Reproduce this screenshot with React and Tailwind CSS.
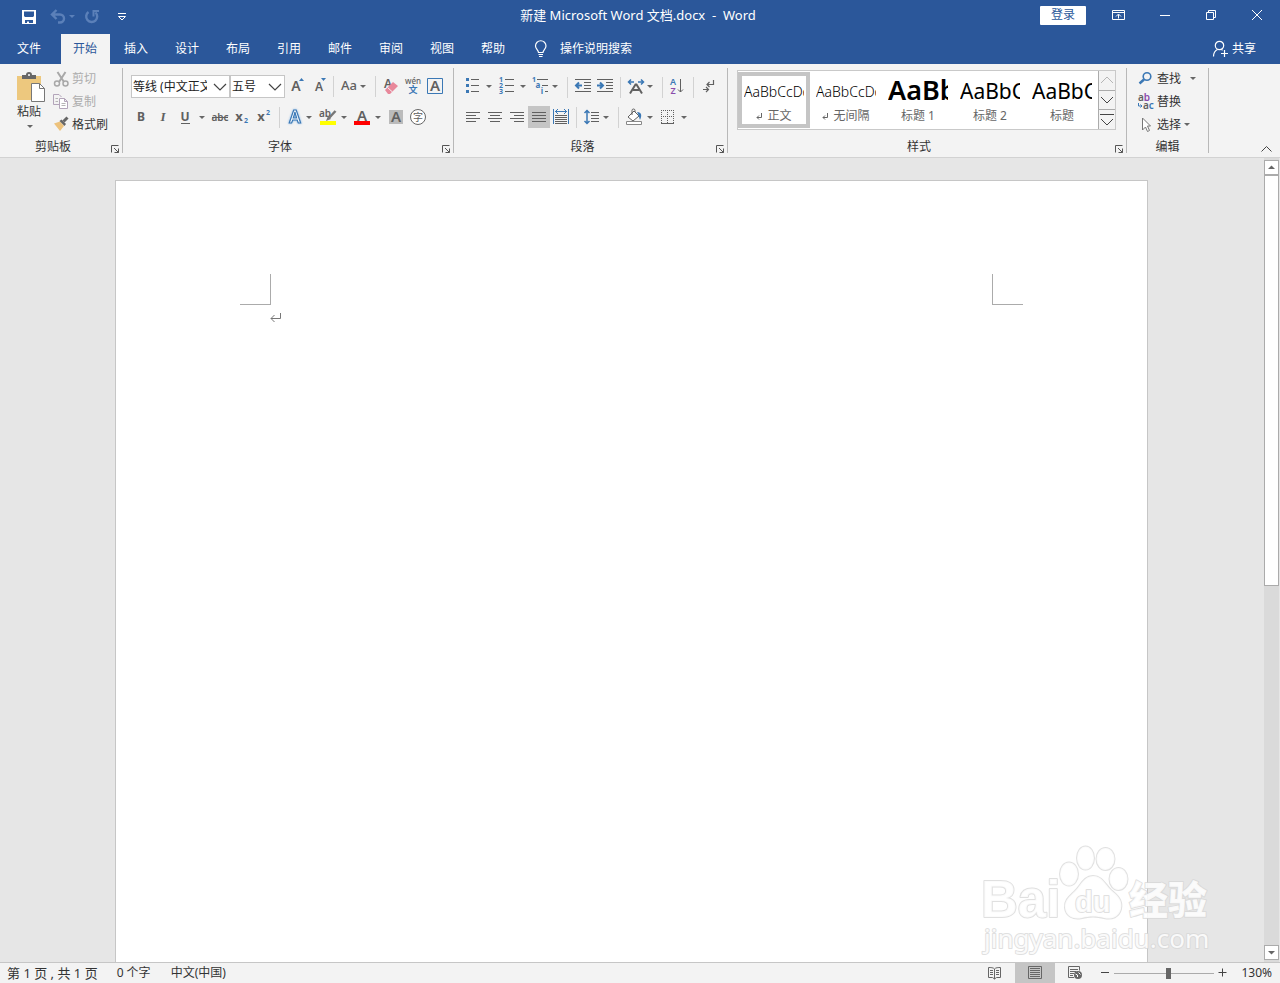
import React from "react";

const INK = "#606060";
const BLUE = "#3b78b5";

/* ---------- shared pieces ---------- */

function Art({ w = 22, h = 22, children, className = "" }) {
  return (
    <svg
      width={w}
      height={h}
      viewBox={`0 0 ${w} ${h}`}
      fill="none"
      aria-hidden="true"
      className={`block shrink-0 ${className}`}
    >
      {children}
    </svg>
  );
}

function Caret({ x, y = 11, fill = "#666" }) {
  return <path d={`M${x - 3} ${y - 1}h6l-3 3z`} fill={fill} />;
}

function Tool({ label, w = 22, active = false, children }) {
  return (
    <button
      type="button"
      aria-label={label}
      title={label}
      className={`block shrink-0 ${active ? "bg-[#c5c5c5]" : "hover:bg-[#d5d5d5]"}`}
    >
      <Art w={w}>{children}</Art>
    </button>
  );
}

function Glyph({ x = 11, y = 16, size = 13, weight = 700, fill = INK, italic, children, ...rest }) {
  return (
    <text
      x={x}
      y={y}
      fontSize={size}
      fontWeight={weight}
      fill={fill}
      fontStyle={italic ? "italic" : undefined}
      textAnchor="middle"
      {...rest}
    >
      {children}
    </text>
  );
}

function Divider({ tight = false }) {
  return <span className={`h-[21px] w-px shrink-0 bg-[#d2d2d2] ${tight ? "ml-[3px] mr-1" : "mx-1"}`} />;
}

function Group({ name, width, launcher = true, children }) {
  return (
    <section aria-label={name} className={`relative flex h-[85px] shrink-0 flex-col border-r border-[#b8b8b8] ${width}`}>
      <div className="h-[75px]">{children}</div>
      <div className={`leading-3 text-center ${launcher ? "pr-4" : ""}`}>{name}</div>
      {launcher && (
        <button type="button" aria-label={`${name}设置`} className="absolute -bottom-0.5 right-px">
          <Art w={12} h={12}>
            <path d="M2.500 9.500V2.500H9.500M5 5l4.500 4.500M9.500 5.500v4H5.500" stroke="#555" />
          </Art>
        </button>
      )}
    </section>
  );
}

/* ---------- title bar and tabs ---------- */

function TitleBar() {
  return (
    <header className="grid h-[30px] grid-cols-[1fr_auto_1fr] items-center bg-[#2b579a] text-white">
      <div className="flex items-center pl-[18px]">
        <button type="button" aria-label="保存">
          <Art w={22} h={30}>
            <path d="M4 10h14v14H4z" fill="#fff" />
            <path d="M6 11.500h10v4.500l-1 1H7l-1-1zM7 20h8v3h-4v-1.500H9V23H7z" fill="#2b579a" />
          </Art>
        </button>
        <button type="button" aria-label="撤消" className="ml-2">
          <Art w={32} h={30}>
            <path d="M4 14.500h8a4 4 0 0 1 0 8h-2M8.500 10L4 14.500l4.500 4.500" stroke="#5b80b9" strokeWidth="2.400" />
            <Caret x={24} y={16} fill="#5b80b9" />
          </Art>
        </button>
        <button type="button" aria-label="恢复" className="ml-0.5">
          <Art w={22} h={30}>
            <path d="M6.500 12A5.500 5.500 0 1 0 13.500 12.500" stroke="#5b80b9" strokeWidth="2.400" />
            <path d="M10.500 11H17M11.500 10v6.500" stroke="#5b80b9" strokeWidth="2" />
          </Art>
        </button>
        <button type="button" aria-label="自定义快速访问工具栏" className="ml-2.5">
          <Art w={20} h={30}>
            <path d="M4 13.500h8M4.500 16.500L8 20l3.500-3.500z" stroke="#fff" />
          </Art>
        </button>
      </div>
      <h1 className="whitespace-pre pr-1 text-[13px]">新建 Microsoft Word 文档.docx  -  Word</h1>
      <div className="flex items-center justify-end">
        <button type="button" className="mr-2.5 h-[19px] w-[46px] rounded-[1px] bg-white text-[#2b579a]">
          登录
        </button>
        <button type="button" aria-label="功能区显示选项">
          <Art w={46} h={30}>
            <path d="M16.500 10.500h12v9h-12zM16.500 12.500h12M22.500 18.500v-4M20 16.500l2.500-2.500 2.500 2.500" stroke="#fff" />
          </Art>
        </button>
        <button type="button" aria-label="最小化">
          <Art w={46} h={30}>
            <path d="M18 15.500h10" stroke="#fff" />
          </Art>
        </button>
        <button type="button" aria-label="向下还原">
          <Art w={46} h={30}>
            <path d="M18.500 12.500h7v7h-7zM20.500 12.500v-2h7v7h-2" stroke="#fff" />
          </Art>
        </button>
        <button type="button" aria-label="关闭">
          <Art w={46} h={30}>
            <path d="M18 10l10 10M28 10L18 20" stroke="#fff" />
          </Art>
        </button>
      </div>
    </header>
  );
}

const TABS = ["文件", "开始", "插入", "设计", "布局", "引用", "邮件", "审阅", "视图", "帮助"];

function TabBar() {
  return (
    <nav className="flex h-[34px] items-end bg-[#2b579a] text-white">
      <div role="tablist" className="flex gap-0.5">
        {TABS.map((tab) => (
          <button
            key={tab}
            type="button"
            role="tab"
            aria-selected={tab === "开始"}
            className={`h-[30px] pr-px ${tab === "文件" ? "w-[59px]" : "w-[49px]"} ${
              tab === "开始" ? "bg-[#f3f3f3] text-[#2b579a]" : ""
            }`}
          >
            {tab}
          </button>
        ))}
      </div>
      <button type="button" className="ml-[15px] flex h-[30px] items-center gap-[11px]">
        <Art w={16} h={18}>
          <path
            d="M5.500 12.500C5.500 10 2.500 9 2.500 6a5 5 0 0 1 10.500 0c0 3-3 4-3 6.500zM5.500 14.500h4.500M6 16.500h3.500"
            stroke="#fff"
            strokeWidth="1.200"
          />
        </Art>
        <span>操作说明搜索</span>
      </button>
      <button type="button" className="ml-auto mr-6 flex h-[30px] items-center gap-1">
        <Art w={16} h={18}>
          <circle cx="7.500" cy="5.500" r="4.200" stroke="#fff" strokeWidth="1.200" />
          <path d="M1.500 16.500c0-4 2-6 4-7M9.500 9.300l1 1M12.500 10v7M9 13.500h7" stroke="#fff" strokeWidth="1.200" />
        </Art>
        <span>共享</span>
      </button>
    </nav>
  );
}

/* ---------- ribbon groups ---------- */

function ClipboardGroup() {
  return (
    <Group name="剪贴板" width="w-[123px]">
      <div className="flex pl-[11px]">
        <button type="button" className="flex w-9 flex-col items-center pt-1">
          <Art w={32} h={31}>
            <path d="M4 4h24v24H4z" fill="#edc87e" />
            <path d="M9 7V3h4a3 3 0 0 1 6 0h4v4z" fill="#666" />
            <circle cx="16" cy="3" r="1" fill="#fff" />
            <path d="M18.500 11.500h8l5 5v13h-13z" fill="#fff" stroke="#777" />
            <path d="M26.500 11.500v5h5" stroke="#777" />
          </Art>
          <span className="mt-px leading-4">粘贴</span>
          <Art w={12} h={12}>
            <Caret x={7} y={6} />
          </Art>
        </button>
        <div className="ml-1.5 flex flex-col">
          <button type="button" disabled className="flex h-[22px] items-center gap-0.5 text-[#adadad]">
            <Art w={17} h={18}>
              <path d="M4.500 2l6.500 10M12.500 2L6 12" stroke="#a8a8a8" strokeWidth="2" />
              <circle cx="4" cy="13.500" r="2.500" stroke="#a8a8a8" strokeWidth="1.500" />
              <circle cx="12.500" cy="13.500" r="2.500" stroke="#a8a8a8" strokeWidth="1.500" />
            </Art>
            剪切
          </button>
          <button type="button" disabled className="flex h-[23px] items-center gap-0.5 text-[#adadad]">
            <Art w={17} h={18}>
              <path d="M6 11.500H.5v-10H6l2.500 2.500" stroke="#b3a5ba" />
              <path d="M6.500 5.500h5l3 3v7h-8zM11.500 5.500v3h3" fill="#fff" stroke="#b3a5ba" />
              <path d="M2.500 5.500H5M2.500 8.500H5M8.500 10.500h4M8.500 12.500h4" stroke="#b5b5b5" />
            </Art>
            复制
          </button>
          <button type="button" className="flex h-[23px] items-center gap-0.5">
            <Art w={17} h={18}>
              <path d="M1 7.500l6-2 4 4.500-4 5z" fill="#edc27c" />
              <path d="M6.500 5l2-1.500L13 8l-1.500 2z" fill="#666" />
              <path d="M10.500 5.500l4-4" stroke="#666" strokeWidth="3" />
            </Art>
            格式刷
          </button>
        </div>
      </div>
    </Group>
  );
}

function Combo({ label, value, width }) {
  return (
    <label className={`relative block h-[23px] shrink-0 ${width}`}>
      <span className="sr-only">{label}</span>
      <select
        defaultValue={value}
        className="block h-full w-full appearance-none overflow-hidden border border-[#c6c6c6] bg-white pl-px pr-[22px] text-[#222]"
      >
        <option>{value}</option>
      </select>
      <svg width="14" height="8" viewBox="0 0 14 8" fill="none" className="pointer-events-none absolute right-[3px] top-2">
        <path d="M1 1l6 6 6-6" stroke="#444" strokeWidth="1.200" />
      </svg>
    </label>
  );
}

function FontGroup() {
  return (
    <Group name="字体" width="w-[331px]">
      <div className="flex items-center pl-2 pt-[7px]">
        <Combo label="字体" value="等线 (中文正文)" width="w-[99px]" />
        <Combo label="字号" value="五号" width="w-[55px]" />
        <Tool label="增大字号">
          <Glyph y={15} x={11} size={14} weight={600}>A</Glyph>
          <path d="M14 5l2.500-3L19 5z" fill={BLUE} />
        </Tool>
        <Tool label="减小字号">
          <Glyph y={15} x={12} size={12} weight={600}>A</Glyph>
          <path d="M14 2h5l-2.500 3z" fill={BLUE} />
        </Tool>
        <Divider />
        <Tool label="更改大小写" w={34}>
          <Glyph y={14} x={11} size={13} weight={500}>Aa</Glyph>
          <Caret x={25} y={10} />
        </Tool>
        <Divider tight />
        <Tool label="清除所有格式">
          <Glyph y={12} x={8} size={12} weight={600}>A</Glyph>
          <path d="M5 14l8-8 5 4-8 8H8z" fill="#e8889b" />
          <path d="M7.500 11.500l5 4.500" stroke="#f3f3f3" />
        </Tool>
        <Tool label="拼音指南">
          <Glyph y={8} size={8} weight={500}>wén</Glyph>
          <Glyph y={17} size={9} fill={BLUE}>文</Glyph>
        </Tool>
        <Tool label="字符边框">
          <path d="M3.500 2.500h15v15h-15z" stroke={BLUE} />
          <Glyph y={15} size={15} weight={600}>A</Glyph>
        </Tool>
      </div>
      <div className="flex items-center pl-[7px] pt-2">
        <Tool label="加粗"><Glyph y={15} size={12}>B</Glyph></Tool>
        <Tool label="倾斜"><Glyph y={15} size={13} italic fontFamily="Liberation Serif, serif">I</Glyph></Tool>
        <Tool label="下划线" w={35}>
          <Glyph y={15} size={12} weight={700}>U</Glyph>
          <path d="M7 17.500h9" stroke={INK} />
          <Caret x={28} />
        </Tool>
        <Tool label="删除线">
          <Glyph y={15} size={10} weight={600}>abc</Glyph>
          <path d="M3 11.500h16" stroke={INK} />
        </Tool>
        <Tool label="下标">
          <Glyph x={8} y={15} size={13}>x</Glyph>
          <Glyph x={15} y={17} size={7} fill={BLUE}>2</Glyph>
        </Tool>
        <Tool label="上标">
          <Glyph x={8} y={15} size={13}>x</Glyph>
          <Glyph x={15} y={9} size={7} fill={BLUE}>2</Glyph>
        </Tool>
        <Divider />
        <Tool label="文本效果" w={34}>
          <text
            x="11"
            y="17"
            fontSize="17"
            fontWeight="600"
            textAnchor="middle"
            fill="#fff"
            stroke={BLUE}
            strokeWidth="1.200"
            className="drop-shadow-[0_0_1px_#8ab8e6]"
          >
            A
          </text>
          <Caret x={25} />
        </Tool>
        <Tool label="突出显示" w={34}>
          <Glyph x={7} y={11} size={10} weight={600}>ab</Glyph>
          <path d="M17.500 5l-6.500 7" stroke="#777" strokeWidth="2.500" />
          <path d="M10 10l3 3-5 2z" fill="#777" />
          <path d="M2 15h16v4H2z" fill="#ff0" />
          <Caret x={26} />
        </Tool>
        <Tool label="字体颜色" w={34}>
          <Glyph x={10} y={15} size={15} weight={600}>A</Glyph>
          <path d="M2 15h16v4H2z" fill="#f00" />
          <Caret x={26} />
        </Tool>
        <Tool label="字符底纹">
          <path d="M3 4h14v14H3z" fill="#bbb" />
          <Glyph x={10} y={16} size={15} weight={600}>A</Glyph>
        </Tool>
        <Tool label="带圈字符">
          <circle cx="10" cy="11" r="7.500" fill="#fff" stroke="#666" />
          <Glyph x={10} y={15} size={10} weight={400}>字</Glyph>
        </Tool>
      </div>
    </Group>
  );
}

const ALIGN = [
  ["左对齐", "M4 6.500h14M4 9.500h10M4 12.500h14M4 15.500h10"],
  ["居中", "M4 6.500h14M6 9.500h10M4 12.500h14M6 15.500h10"],
  ["右对齐", "M4 6.500h14M8 9.500h10M4 12.500h14M8 15.500h10"],
  ["两端对齐", "M4 6.500h14M4 9.500h14M4 12.500h14M4 15.500h14"],
];

function ParagraphGroup() {
  return (
    <Group name="段落" width="w-[274px]">
      <div className="flex h-[30px] items-end pl-2 pt-[7px]">
        <Tool label="项目符号" w={34}>
          <path d="M4 2h3v3H4zM4 8h3v3H4zM4 14h3v3H4z" fill={BLUE} />
          <path d="M9 3.500h8M9 9.500h8M9 15.500h8" stroke={INK} />
          <Caret x={27} y={10} />
        </Tool>
        <Tool label="编号" w={34}>
          <Glyph x={5} y={6} size={7} fill={BLUE}>1</Glyph>
          <Glyph x={5} y={12} size={7} fill={BLUE}>2</Glyph>
          <Glyph x={5} y={18} size={7} fill={BLUE}>3</Glyph>
          <path d="M9 3.500h9M9 9.500h9M9 15.500h9" stroke={INK} />
          <Caret x={27} y={10} />
        </Tool>
        <Tool label="多级列表" w={33}>
          <Glyph x={4} y={6} size={7} fill={BLUE}>1</Glyph>
          <Glyph x={8} y={12} size={8} fill={BLUE}>a</Glyph>
          <Glyph x={12} y={18} size={8} fill={BLUE}>i</Glyph>
          <path d="M7 3.500h11M12 9.500h6M15 15.500h3" stroke={INK} />
          <Caret x={25} y={10} />
        </Tool>
        <Divider />
        <Tool label="减少缩进量">
          <path d="M3 3.500h16M12 6.500h7M12 9.500h7M12 12.500h7M3 15.500h16" stroke={INK} />
          <path d="M10 9.500H4M7 6.500l-3 3 3 3" stroke={BLUE} strokeWidth="2" />
        </Tool>
        <Tool label="增加缩进量">
          <path d="M3 3.500h16M12 6.500h7M12 9.500h7M12 12.500h7M3 15.500h16" stroke={INK} />
          <path d="M3 9.500h6M6 6.500l3 3-3 3" stroke={BLUE} strokeWidth="2" />
        </Tool>
        <Divider />
        <Tool label="中文版式" w={33}>
          <path d="M5 17.500l5.500-9h1l5.500 9M8 14h6" stroke={INK} strokeWidth="2" />
          <path d="M3.500 6h5.500M6 3.500L3.500 6 6 8.500M13 6h5.500M16 3.500L18.500 6 16 8.500" stroke={BLUE} strokeWidth="1.500" />
          <Caret x={25} y={10} />
        </Tool>
        <Divider />
        <Tool label="排序">
          <Glyph x={6} y={9} size={9} fill={BLUE} weight={600}>A</Glyph>
          <Glyph x={6} y={18} size={9} fill="#8a4bab" weight={600}>Z</Glyph>
          <path d="M13.500 3v13M11 13.500l2.500 2.500 2.500-2.500" stroke={INK} />
        </Tool>
        <Divider />
        <Tool label="显示编辑标记">
          <path d="M15.500 4v4.500H9M11.500 6L9 8.500l2.500 2.500M5 13.500h5M8 11l2.500 2.500L8 16" stroke={INK} strokeWidth="1.200" />
        </Tool>
      </div>
      <div className="flex items-center pl-2 pt-2">
        {ALIGN.map(([label, d]) => (
          <Tool key={label} label={label} active={label === "两端对齐"}>
            <path d={d} stroke={INK} />
          </Tool>
        ))}
        <Tool label="分散对齐">
          <path d="M3.500 3v15M18.500 3v15M5 5.500h12M8 3L5.500 5.500 8 8M14 3l2.500 2.500L14 8" stroke={BLUE} />
          <path d="M5 9.500h12M5 11.500h12M5 13.500h12M5 15.500h12M5 17.500h12" stroke={INK} />
        </Tool>
        <Divider />
        <Tool label="行和段落间距" w={33}>
          <path d="M6 4v14M3.500 7L6 4.500 8.500 7M3.500 15L6 17.500 8.500 15" stroke={BLUE} strokeWidth="1.500" />
          <path d="M10 6.500h8M10 9.500h8M10 12.500h8M10 15.500h8" stroke={INK} />
          <Caret x={25} />
        </Tool>
        <Divider />
        <Tool label="底纹" w={34}>
          <path d="M5 11l6-6 5 5-6 5z" fill="#fff" stroke={INK} />
          <path d="M9 9V4.500a1.500 1.500 0 0 1 3 0V6" stroke={INK} />
          <path d="M14 6c5 0 5 4 3 8-1-2-1-5-3-8z" fill={BLUE} />
          <path d="M3.500 15.500h15v3h-15z" fill="#fff" stroke="#888" />
          <Caret x={27} />
        </Tool>
        <Tool label="边框" w={34}>
          <path d="M4 4.500h13M4.500 4v13M10.500 4v13M16.500 4v13M4 10.500h13" stroke={INK} strokeDasharray="1 1" />
          <path d="M4 17.500h13" stroke={INK} />
          <Caret x={27} />
        </Tool>
      </div>
    </Group>
  );
}

const STYLES = [
  { name: "正文", sample: "AaBbCcDd", cls: "text-[14px] font-light", mark: true, active: true },
  { name: "无间隔", sample: "AaBbCcDd", cls: "text-[14px] font-light", mark: true },
  { name: "标题 1", sample: "AaBbC", cls: "pb-1 text-[27px] font-semibold" },
  { name: "标题 2", sample: "AaBbCc", cls: "pb-0.5 text-[21px]" },
  { name: "标题", sample: "AaBbCc", cls: "pb-0.5 text-[21px]" },
];

function StylesGroup() {
  return (
    <Group name="样式" width="w-[399px]">
      <div className="flex h-[62px] pl-[9px] pt-0.5">
        <div className="flex w-[379px] border border-[#c9c9c9] bg-white">
          <div className="flex flex-1 py-px">
            {STYLES.map((s) => (
              <button
                key={s.name}
                type="button"
                className={`flex h-14 w-[72px] shrink-0 flex-col border-4 px-[2px] ${
                  s.active ? "border-[#c5c5c5]" : "border-transparent"
                }`}
              >
                <span className={`flex h-8 w-[60px] items-center overflow-hidden whitespace-nowrap text-black ${s.cls}`}>
                  {s.sample}
                </span>
                <span className="flex w-full items-center justify-center gap-1 leading-4 text-[#666]">
                  {s.mark && (
                    <Art w={7} h={8}>
                      <path d="M5.500 1v4.500H1M3 3.500l-2 2 2 2" stroke="#666" />
                    </Art>
                  )}
                  {s.name}
                </span>
              </button>
            ))}
          </div>
          <div className="flex w-[17px] shrink-0 flex-col divide-y divide-[#ababab] border-l border-[#ababab]">
            <button type="button" aria-label="上一行" className="flex flex-1 items-center justify-center bg-[#f3f3f3]">
              <Art w={14} h={8}><path d="M1 7l6-6 6 6" stroke="#b5b5b5" /></Art>
            </button>
            <button type="button" aria-label="下一行" className="flex flex-1 items-center justify-center bg-[#f3f3f3]">
              <Art w={14} h={8}><path d="M1 1l6 6 6-6" stroke="#444" /></Art>
            </button>
            <button type="button" aria-label="其他样式" className="flex flex-1 items-center justify-center bg-[#f3f3f3]">
              <Art w={16} h={14}><path d="M1 1.500h14M2 6l6 6 6-6" stroke="#444" /></Art>
            </button>
          </div>
        </div>
      </div>
    </Group>
  );
}

function EditGroup() {
  return (
    <Group name="编辑" width="w-[82px]" launcher={false}>
      <div className="flex flex-col items-start pl-2.5">
        <button type="button" className="flex h-[22px] items-center">
          <Art w={20} h={18}>
            <circle cx="10" cy="6.500" r="3.800" stroke={BLUE} strokeWidth="1.600" />
            <path d="M7 9.500l-4.500 4" stroke={BLUE} strokeWidth="2.400" />
          </Art>
          查找
          <Art w={22} h={14}><Caret x={12} y={6} /></Art>
        </button>
        <button type="button" className="flex h-[23px] items-center">
          <Art w={20} h={18}>
            <text x="1" y="8" fontSize="10" fontWeight="600" fill={INK}>
              a<tspan fill="#8a4bab">b</tspan>
            </text>
            <text x="6" y="16" fontSize="10" fontWeight="600" fill={INK}>
              a<tspan fill={BLUE}>c</tspan>
            </text>
            <path d="M1.500 10v3H5M3.500 11.500L5 13l-1.500 1.500" stroke={BLUE} />
          </Art>
          替换
        </button>
        <button type="button" className="flex h-[23px] items-center">
          <Art w={20} h={18}>
            <path d="M5.500 2v12l3-3 2 4.500 2-1-2-4.500h3z" fill="#fff" stroke="#777" />
          </Art>
          选择
          <Art w={12} h={14}><Caret x={6} y={6} /></Art>
        </button>
      </div>
    </Group>
  );
}

/* ---------- document area ---------- */

function Watermark() {
  const outline = { stroke: "#d6d6d6", strokeOpacity: 0.75, strokeWidth: 2, paintOrder: "stroke", strokeLinejoin: "round" };
  return (
    <svg
      width="236"
      height="116"
      viewBox="0 0 236 116"
      fill="#fff"
      fillOpacity="0.85"
      aria-hidden="true"
      className="pointer-events-none absolute bottom-1 right-[65px]"
    >
      <g {...outline}>
        <text x="2" y="75" fontSize="51" fontWeight="700" fontFamily="Liberation Sans, sans-serif">Bai</text>
        <ellipse cx="90" cy="32" rx="9" ry="11.500" />
        <ellipse cx="106.500" cy="16" rx="8.500" ry="11.500" />
        <ellipse cx="126.500" cy="17" rx="9" ry="11" />
        <ellipse cx="139.500" cy="37" rx="9" ry="11" />
        <path d="M114 34c9 0 12 8 18 14 6 5 12 10 10 19-2 8-9 11-17 9-7-2-15-2-22 0-9 2-16-2-17-10-1-8 5-12 10-17 6-6 9-15 18-15z" />
        <text x="96" y="70" fontSize="29" fontWeight="700" fontFamily="Liberation Sans, sans-serif">du</text>
        <text x="150" y="72" fontSize="39" fontWeight="900" fontFamily="Noto Sans CJK SC, sans-serif">经验</text>
        <text x="5" y="106" fontSize="26" fontFamily="Noto Sans, sans-serif">jingyan.baidu.com</text>
      </g>
    </svg>
  );
}

function Workspace() {
  return (
    <main className="relative flex min-h-0 flex-1 bg-[#e6e6e6]">
      <div className="flex min-w-0 flex-1 justify-center overflow-hidden pr-0.5 pt-[22px]">
        <article className="w-full max-w-[1033px] border border-b-0 border-[#c6c6c6] bg-white px-[124px] pt-[93px]">
          <div className="flex justify-between">
            <span className="size-[31px] border-b border-r border-[#ababab]" />
            <span className="size-[31px] border-b border-l border-[#ababab]" />
          </div>
          <div className="pl-[30px] pt-[7px]">
            <Art w={12} h={11}>
              <path d="M10.500 1v5.500H1M4.500 3L1 6.500 4.500 10" stroke="#777" />
            </Art>
          </div>
        </article>
      </div>
      <Watermark />
      <div className="mr-px flex w-[15px] flex-col bg-[#dadada] py-0.5">
        <button type="button" aria-label="向上滚动" className="border border-[#ababab] bg-white">
          <Art w={13} h={13}><path d="M3 8h7L6.500 4.500z" fill="#666" /></Art>
        </button>
        <div className="flex-1">
          <div className="h-[53.4%] border border-[#ababab] bg-white" />
        </div>
        <button type="button" aria-label="向下滚动" className="border border-[#ababab] bg-white">
          <Art w={13} h={13}><path d="M3 5h7L6.500 8.500z" fill="#666" /></Art>
        </button>
      </div>
    </main>
  );
}

function StatusBar() {
  return (
    <footer className="flex h-[21px] shrink-0 items-center border-t border-[#c6c6c6] bg-[#f3f3f3] pl-[7px] pr-2">
      <span className="text-[13px]">第 1 页 , 共 1 页</span>
      <span className="ml-[19px]">0 个字</span>
      <span className="ml-5">中文(中国)</span>
      <div className="ml-auto flex items-center">
        <button type="button" aria-label="阅读视图">
          <Art w={41} h={20}>
            <path d="M14.500 4.500c2 0 5 0 6 1.500 1-1.500 4-1.500 6-1.500v10h-4l-2 1.500-2-1.500h-4zM20.500 6v10" stroke="#666" />
            <path d="M16 7.500h3M16 9.500h3M16 11.500h3M22 7.500h3M22 9.500h3M22 11.500h3" stroke="#666" />
          </Art>
        </button>
        <button type="button" aria-label="页面视图" aria-pressed="true" className="bg-[#c5c5c5]">
          <Art w={40} h={20}>
            <path d="M13.500 3.500h13v12h-13zM15 5.500h10M15 7.500h10M15 9.500h10M15 11.500h10M15 13.500h10" stroke="#666" />
          </Art>
        </button>
        <button type="button" aria-label="Web 版式视图">
          <Art w={40} h={20}>
            <path d="M19 14.500h-5.500v-11h11v4M15 6.500h8M15 8.500h6M15 10.500h4M15 12.500h3" stroke="#666" />
            <circle cx="23" cy="12" r="4" fill="#666" />
            <path d="M20.500 11l2 1v2M23.500 9.500l2 2" stroke="#fff" />
          </Art>
        </button>
        <button type="button" aria-label="缩小" className="ml-1">
          <Art w={12} h={20}><path d="M2 9.500h8" stroke="#444" /></Art>
        </button>
        <input
          type="range"
          aria-label="显示比例"
          min="0"
          max="100"
          defaultValue="55"
          className="mx-[3px] h-[13px] w-[100px] appearance-none bg-[linear-gradient(#ababab,#ababab)] bg-[length:100%_1px] bg-center bg-no-repeat [&::-webkit-slider-thumb]:h-[11px] [&::-webkit-slider-thumb]:w-[5px] [&::-webkit-slider-thumb]:appearance-none [&::-webkit-slider-thumb]:bg-[#666]"
        />
        <button type="button" aria-label="放大">
          <Art w={12} h={20}><path d="M1.500 9.500h8M5.500 5.500v8" stroke="#444" /></Art>
        </button>
        <button type="button" className="ml-[11px] w-8 whitespace-nowrap text-right">130%</button>
      </div>
    </footer>
  );
}

export default function App() {
  return (
    <div className="flex h-screen flex-col overflow-hidden font-['Noto_Sans','Noto_Sans_CJK_SC',sans-serif] text-[12px] leading-[18px] text-[#333]">
      <TitleBar />
      <TabBar />
      <div className="flex shrink-0 border-b border-[#d2d2d2] bg-[#f3f3f3] py-1">
        <ClipboardGroup />
        <FontGroup />
        <ParagraphGroup />
        <StylesGroup />
        <EditGroup />
        <button type="button" aria-label="折叠功能区" className="ml-auto mr-[7px] self-end">
          <Art w={13} h={8}><path d="M1.500 6.500l5-5 5 5" stroke="#444" /></Art>
        </button>
      </div>
      <Workspace />
      <StatusBar />
    </div>
  );
}
